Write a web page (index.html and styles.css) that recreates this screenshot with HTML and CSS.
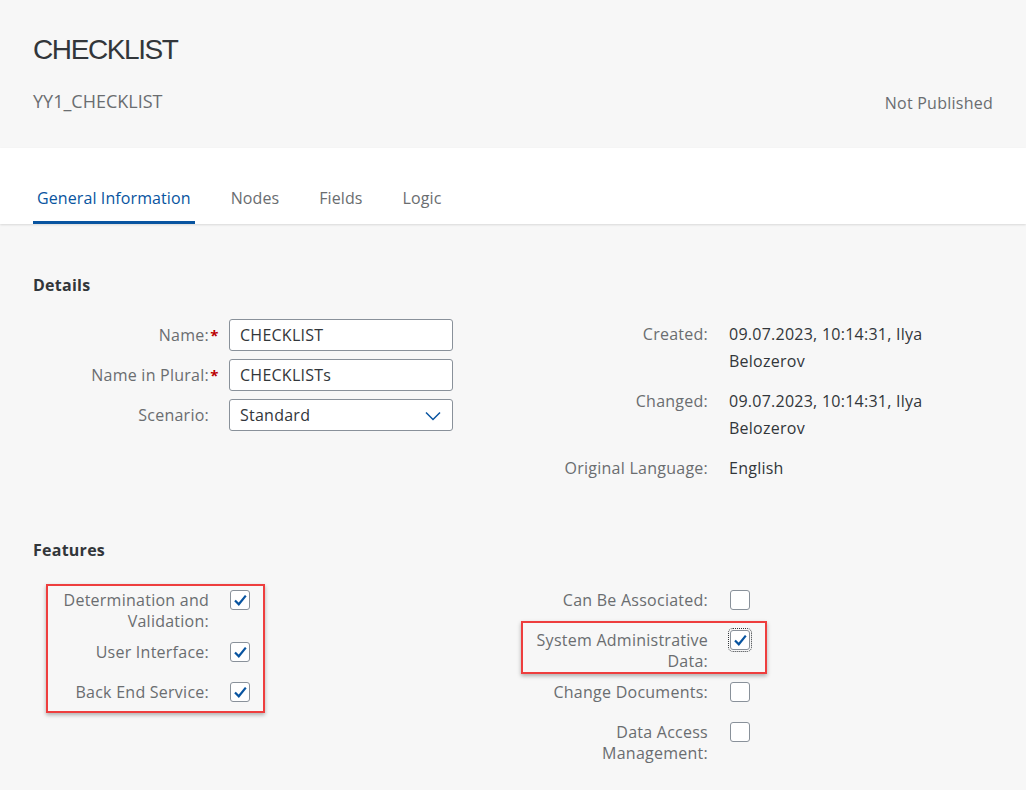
FILE: index.html
```html
<!DOCTYPE html>
<html lang="en">
<head>
<meta charset="utf-8">
<title>Checklist</title>
<link rel="stylesheet" href="styles.css">
</head>
<body>
<header class="header">
  <h1 class="title">CHECKLIST</h1>
  <div class="subrow">
    <span class="subtitle">YY1_CHECKLIST</span>
    <span class="status">Not Published</span>
  </div>
</header>
<nav class="tabs">
  <div class="tab active">General Information</div>
  <div class="tab">Nodes</div>
  <div class="tab">Fields</div>
  <div class="tab">Logic</div>
</nav>
<main class="content">
  <h2 class="section-title">Details</h2>
  <div class="two-col">
    <div class="form-left">
      <div class="label">Name:<span class="req">*</span></div>
      <div class="input">CHECKLIST</div>
      <div class="label">Name in Plural:<span class="req">*</span></div>
      <div class="input">CHECKLISTs</div>
      <div class="label">Scenario:<span class="req"></span></div>
      <div class="input select">Standard
        <svg class="chev" width="16" height="10" viewBox="0 0 16 10"><path d="M1 1.5 L8 8.5 L15 1.5" fill="none" stroke="#0854a0" stroke-width="1.5"/></svg>
      </div>
    </div>
    <div class="form-right">
      <div class="dlabel">Created:</div>
      <div class="dvalue">09.07.2023, 10:14:31, Ilya Belozerov</div>
      <div class="dlabel">Changed:</div>
      <div class="dvalue">09.07.2023, 10:14:31, Ilya Belozerov</div>
      <div class="dlabel">Original Language:</div>
      <div class="dvalue">English</div>
    </div>
  </div>

  <h2 class="section-title features-title">Features</h2>
  <div class="two-col features">
    <div class="feat-left">
      <div class="flabel">Determination and Validation:</div>
      <div class="fcell"><span class="cb checked"><svg viewBox="0 0 20 20" width="20" height="20"><path d="M5 10.5 L8.8 14.3 L15.8 5.6" fill="none" stroke="#0854a0" stroke-width="2.2"/></svg></span></div>
      <div class="flabel">User Interface:</div>
      <div class="fcell"><span class="cb checked"><svg viewBox="0 0 20 20" width="20" height="20"><path d="M5 10.5 L8.8 14.3 L15.8 5.6" fill="none" stroke="#0854a0" stroke-width="2.2"/></svg></span></div>
      <div class="flabel">Back End Service:</div>
      <div class="fcell"><span class="cb checked"><svg viewBox="0 0 20 20" width="20" height="20"><path d="M5 10.5 L8.8 14.3 L15.8 5.6" fill="none" stroke="#0854a0" stroke-width="2.2"/></svg></span></div>
    </div>
    <div class="feat-right">
      <div class="flabel">Can Be Associated:</div>
      <div class="fcell"><span class="cb"></span></div>
      <div class="flabel">System Administrative Data:</div>
      <div class="fcell"><span class="cb checked focused"><svg viewBox="0 0 20 20" width="20" height="20"><path d="M5 10.5 L8.8 14.3 L15.8 5.6" fill="none" stroke="#0854a0" stroke-width="2.2"/></svg></span></div>
      <div class="flabel">Change Documents:</div>
      <div class="fcell"><span class="cb"></span></div>
      <div class="flabel">Data Access Management:</div>
      <div class="fcell"><span class="cb"></span></div>
    </div>
    <div class="highlight hl-left"></div>
    <div class="highlight hl-right"></div>
  </div>
</main>
</body>
</html>
```

FILE: styles.css
```css
* { box-sizing: border-box; }
html, body { margin: 0; padding: 0; }
body {
  background: #f7f7f7;
  font-family: "Open Sans", "Liberation Sans", Arial, sans-serif;
  color: #32363a;
  width: 1026px;
  height: 790px;
  overflow: hidden;
  letter-spacing: 0.25px;
}
.header {
  background: #f7f7f7;
  height: 148px;
  padding: 33px 33px 0 33px;
}
.title {
  margin: 0;
  font-family: "Liberation Sans", Arial, sans-serif;
  font-weight: normal;
  font-size: 28px;
  line-height: 34px;
  letter-spacing: -1.4px;
  color: #32363a;
}
.subrow {
  display: flex;
  justify-content: space-between;
  align-items: flex-end;
  margin-top: 23px;
}
.subtitle {
  font-size: 18px;
  line-height: 22px;
  letter-spacing: 0;
  color: #6a6d70;
}
.status {
  font-size: 16px;
  line-height: 20px;
  color: #6a6d70;
  position: relative;
  top: 1px;
}
.tabs {
  background: #fff;
  height: 76px;
  display: flex;
  align-items: flex-end;
  gap: 32px;
  padding-left: 33px;
  box-shadow: 0 1px 2px rgba(0,0,0,0.12);
  position: relative;
}
.tab {
  font-size: 16px;
  line-height: 20px;
  letter-spacing: 0.1px;
  padding: 0 4px 13px 4px;
  border-bottom: 3px solid transparent;
  color: #6a6d70;
}
.tab.active {
  color: #0854a0;
  border-bottom-color: #0854a0;
  border-radius: 2px 2px 0 0;
}
.content {
  padding: 0 33px;
}
.section-title {
  margin: 51px 0 24px 0;
  font-size: 16px;
  line-height: 20px;
  font-weight: bold;
  color: #32363a;
}
.features-title {
  margin-top: 47px;
}
.two-col {
  display: grid;
  grid-template-columns: 480px 480px;
  position: relative;
}
.form-left {
  display: grid;
  grid-template-columns: 187px 224px;
  column-gap: 9px;
  row-gap: 8px;
  align-content: start;
}
.label {
  display: flex;
  justify-content: flex-end;
  align-items: center;
  font-size: 16px;
  color: #6a6d70;
  height: 32px;
}
.req {
  display: inline-block;
  width: 11px;
  text-align: center;
  color: #bb0000;
  font-weight: bold;
  font-size: 15px;
}
.input {
  height: 32px;
  border: 1px solid #89919a;
  border-radius: 3px;
  background: #fff;
  font-size: 16px;
  line-height: 30px;
  padding: 0 10px;
  color: #32363a;
  position: relative;
}
.select .chev {
  position: absolute;
  right: 11px;
  top: 11px;
}
.form-right {
  display: grid;
  grid-template-columns: 195px 224px;
  column-gap: 21px;
  align-content: start;
}
.dlabel, .dvalue {
  font-size: 16px;
  line-height: 27px;
  padding: 2px 0 11px 0;
}
.dlabel {
  text-align: right;
  color: #6a6d70;
}
.dvalue {
  color: #32363a;
}
.feat-left {
  display: grid;
  grid-template-columns: 176px 40px;
  column-gap: 21px;
  align-content: start;
}
.feat-right {
  display: grid;
  grid-template-columns: 195px 40px;
  column-gap: 22px;
  align-content: start;
}
.flabel {
  font-size: 16px;
  line-height: 21px;
  padding: 6px 0 4px 15px;
  min-height: 40px;
  text-align: right;
  color: #6a6d70;
}
.fcell {
  height: 32px;
  display: flex;
  align-items: center;
}
.cb {
  width: 20px;
  height: 20px;
  border: 1px solid #89919a;
  border-radius: 3px;
  background: #fff;
  display: flex;
  align-items: center;
  justify-content: center;
  overflow: hidden;
}
.cb svg { flex: none; }
.cb.focused {
  outline: 1px dotted #32363a;
  outline-offset: 1px;
}
.highlight {
  position: absolute;
  border: 2.5px solid #ee3e3e;
  box-shadow: 0 2px 4px rgba(0,0,0,0.3);
  pointer-events: none;
}
.hl-left {
  left: 13px;
  top: 0;
  width: 219px;
  height: 129px;
}
.hl-right {
  left: 488px;
  top: 37px;
  width: 246px;
  height: 53px;
}
```
